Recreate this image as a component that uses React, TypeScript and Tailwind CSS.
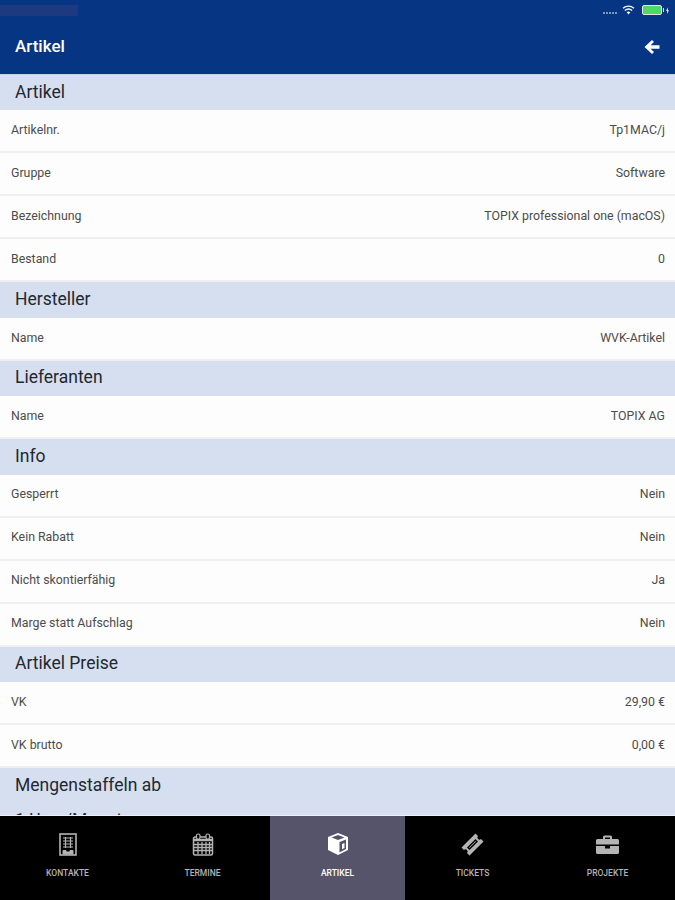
const sections = [
  {
    title: "Artikel",
    rows: [
      ["Artikelnr.", "Tp1MAC/j"],
      ["Gruppe", "Software"],
      ["Bezeichnung", "TOPIX professional one (macOS)"],
      ["Bestand", "0"],
    ],
  },
  { title: "Hersteller", rows: [["Name", "WVK-Artikel"]] },
  { title: "Lieferanten", rows: [["Name", "TOPIX AG"]] },
  {
    title: "Info",
    rows: [
      ["Gesperrt", "Nein"],
      ["Kein Rabatt", "Nein"],
      ["Nicht skontierfähig", "Ja"],
      ["Marge statt Aufschlag", "Nein"],
    ],
  },
  {
    title: "Artikel Preise",
    rows: [
      ["VK", "29,90 €"],
      ["VK brutto", "0,00 €"],
    ],
  },
];

function BuildingIcon() {
  return (
    <svg width="20" height="23" viewBox="0 0 20 23" fill="none" stroke="currentColor">
      <rect x="2" y="1" width="16" height="21" strokeWidth="1.6" />
      <path d="M5 5h10M5 8h10M5 11h10M5 14h10M7.5 4v11M12.5 4v11" strokeWidth="1.2" />
      <path d="M5 21v-3.5h3V19h4v-1.5h3V21z" fill="currentColor" strokeWidth="1" />
    </svg>
  );
}

function CalendarIcon() {
  return (
    <svg width="22" height="23" viewBox="0 0 22 23" fill="none" stroke="currentColor">
      <path d="M3 4h16a1.5 1.5 0 0 1 1.5 1.5v15a1.5 1.5 0 0 1-1.5 1.5H3a1.5 1.5 0 0 1-1.5-1.5v-15A1.5 1.5 0 0 1 3 4z" strokeWidth="1.5" />
      <path d="M2 7h18" strokeWidth="2.5" />
      <path d="M2 11.5h18M2 14.5h18M2 17.5h18M6 9v12M10 9v12M14 9v12M17.5 9v12" strokeWidth="1.3" />
      <rect x="4.5" y="1" width="3.5" height="5" rx="1.5" fill="#000" strokeWidth="1.2" />
      <rect x="14" y="1" width="3.5" height="5" rx="1.5" fill="#000" strokeWidth="1.2" />
    </svg>
  );
}

function BoxIcon() {
  return (
    <svg width="22" height="24" viewBox="0 0 22 24" fill="none">
      <path d="M11 1 21 5v13l-10 5-10-5V5z" fill="currentColor" />
      <path d="M4.5 5.5 11 3l6.5 2.5L11 8z" fill="#55546a" />
      <path d="M12.5 10 19 7.5v9.5l-6.5 3.4z" fill="#55546a" />
      <path d="M15 12l2.500-1v5l-2.500 1.200z" fill="currentColor" />
    </svg>
  );
}

function TicketIcon() {
  return (
    <svg width="23" height="23" viewBox="0 0 23 23" fill="currentColor">
      <path
        fillRule="evenodd"
        d="M14.500 .5 17 3a2 2 0 0 0 3 3L22.500 8.500 8.500 22.500 6 20A2 2 0 0 0 3 17L.5 14.500zM14.500 6 6 14.500l2.500 2.500L17 8.500z"
      />
      <path d="M14.500 8 15 8.500 8.500 15 8 14.500z" />
    </svg>
  );
}

function BriefcaseIcon() {
  return (
    <svg width="23" height="19" viewBox="0 0 23 19" fill="currentColor">
      <path
        fillRule="evenodd"
        d="M7 4V2a1.500 1.500 0 0 1 1.500-1.500h6A1.500 1.500 0 0 1 16 2v2h5.500A1.500 1.500 0 0 1 23 5.500V9.500H0V5.500A1.500 1.500 0 0 1 1.500 4zM9 2.500V4h5V2.500z"
      />
      <path d="M0 11h9v2.500h5V11h9v6.500a1.500 1.500 0 0 1-1.500 1.500h-20A1.500 1.500 0 0 1 0 17.500z" />
    </svg>
  );
}

const tabs = [
  { label: "Kontakte", icon: <BuildingIcon /> },
  { label: "Termine", icon: <CalendarIcon /> },
  { label: "Artikel", icon: <BoxIcon />, active: true },
  { label: "Tickets", icon: <TicketIcon /> },
  { label: "Projekte", icon: <BriefcaseIcon /> },
];

function StatusBar() {
  return (
    <div className="flex h-[20px] items-center justify-between pr-[6px]">
      <div className="h-[11px] w-[78px] bg-[#1d3a80]" />
      <div className="flex items-center">
        <div className="flex gap-[1px] pt-[5px]">
          <span className="h-[2px] w-[2px] bg-[#7f95c0]" />
          <span className="h-[2px] w-[2px] bg-[#7f95c0]" />
          <span className="h-[2px] w-[2px] bg-[#7f95c0]" />
          <span className="h-[2px] w-[2px] bg-[#7f95c0]" />
          <span className="h-[2px] w-[2px] bg-[#7f95c0]" />
        </div>
        <svg className="ml-[5px]" width="13" height="10" viewBox="0 0 14 11" fill="none" stroke="#fff" strokeWidth="1.5">
          <path d="M1 3.500C4.500 .5 9.500 .5 13 3.500M3 6C5.500 4 8.500 4 11 6" />
          <path d="M5 8C6.200 7 7.800 7 9 8L7 10.500z" fill="#fff" stroke="none" />
        </svg>
        <div className="ml-[7px] flex items-center gap-[1px]">
          <div className="h-[10px] w-[20px] rounded-[2px] border border-[#dfe6f2] bg-[#4fd964]" />
          <div className="h-[4px] w-[1px] bg-[#dfe6f2]" />
        </div>
        <svg className="ml-[2px]" width="3" height="7" viewBox="0 0 4 9" fill="#dfe6f2">
          <path d="M2.500 0 0 5h1.500L1.500 9 4 4H2.500z" />
        </svg>
      </div>
    </div>
  );
}

export default function App() {
  return (
    <div className="flex h-[900px] w-[675px] flex-col overflow-hidden bg-white font-[Roboto,sans-serif]">
      <header className="h-[75px] shrink-0 border-b border-b-[#c4d3ec] bg-[#053583] text-white">
        <StatusBar />
        <div className="flex h-[53px] items-center justify-between px-[15px]">
          <h1 className="text-[17px] font-medium">Artikel</h1>
          <svg width="16" height="16" viewBox="0 0 16 16" fill="#fff">
            <path d="M8 1 10 3 6.500 6.300H15.500V9.700H6.500L10 13 8 15 .5 8z" />
          </svg>
        </div>
      </header>

      <main className="min-h-0 flex-1 overflow-hidden bg-[#d6dfef]">
        {sections.map((section) => (
          <section key={section.title}>
            <h2 className="flex h-[35.4px] items-center pb-[2px] pl-[15px] text-[17.5px] text-[#222831]">{section.title}</h2>
            {section.rows.map(([label, value]) => (
              <div
                key={label}
                className="flex h-[43px] items-center justify-between border-b-2 border-b-[#efefef] bg-[#fdfdfd] pb-[1px] pl-[11px] pr-[10px] text-[12.35px] text-[#4c4c4c]"
              >
                <span>{label}</span>
                <span>{value}</span>
              </div>
            ))}
          </section>
        ))}
        <h2 className="flex h-[37px] items-center pb-[2px] pl-[15px] text-[17.5px] text-[#222831]">Mengenstaffeln ab</h2>
        <p className="pt-[5px] pl-[15px] text-[17.5px] leading-[20px] text-[#222831]">1 User/Monat</p>
      </main>

      <nav className="grid h-[85px] shrink-0 grid-cols-5 border-t border-t-[#eef1f7] bg-black">
        {tabs.map((tab) => (
          <div
            key={tab.label}
            className={
              tab.active
                ? "flex flex-col items-center bg-[#55546a] pt-[16px] text-white"
                : "flex flex-col items-center pt-[16px] text-[#b4b4b4]"
            }
          >
            <div className="flex h-[24px] items-center">{tab.icon}</div>
            <span className="mt-[12px] text-[8.5px] leading-[10px] font-medium uppercase">{tab.label}</span>
          </div>
        ))}
      </nav>
    </div>
  );
}
